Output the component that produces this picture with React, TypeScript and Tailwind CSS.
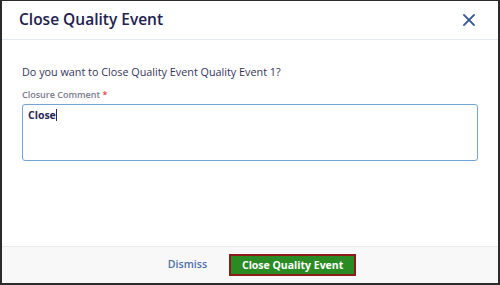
import { X } from "lucide-react";

export default function App() {
  return (
    <div
      className="w-[500px] h-[285px] flex flex-col bg-white border-t border-l-2 border-r-2 border-b-2 border-[#2b2b2b]"
      style={{ fontFamily: '"Open Sans", sans-serif' }}
    >
      {/* Header */}
      <div className="h-[39px] shrink-0 flex items-center justify-between pl-[17px] pr-[19px] border-b border-[#e3e8f2]">
        <h1 className="text-[15.5px] font-semibold text-[#22214f] leading-none">Close Quality Event</h1>
        <button className="text-[#3d5c9a]">
          <X className="w-[20px] h-[20px]" strokeWidth={2.2} />
        </button>
      </div>

      {/* Body */}
      <div className="flex-1 px-[20px] pt-[24px]">
        <p className="text-[10.8px] text-[#36345a] leading-[15px]">
          Do you want to Close Quality Event Quality Event 1?
        </p>
        <label className="block mt-[9px] text-[9px] font-semibold text-[#7b7a8e] leading-[13px]">
          Closure Comment <span className="text-[#e0413a]">*</span>
        </label>
        <div className="mt-[3px] h-[57px] border border-[#74a3d6] rounded-[3px] px-[5px] pt-[1px] leading-[14px]">
          <span className="text-[10.5px] font-bold text-[#2a2856]">Close</span>
          <span className="inline-block w-px h-[12px] bg-[#2a2856] align-[-2px]" />
        </div>
      </div>

      {/* Footer */}
      <div className="h-[37px] shrink-0 flex items-center justify-center gap-[22px] bg-[#f8f8f8] border-t border-[#ebebeb] pl-[24px]">
        <button className="text-[10.6px] font-semibold text-[#4a6ea6]">Dismiss</button>
        <button className="h-[22px] w-[127px] bg-[#2a8a24] border-2 border-[#8c1c1c] text-white text-[10.5px] font-bold leading-none">
          Close Quality Event
        </button>
      </div>
    </div>
  );
}
